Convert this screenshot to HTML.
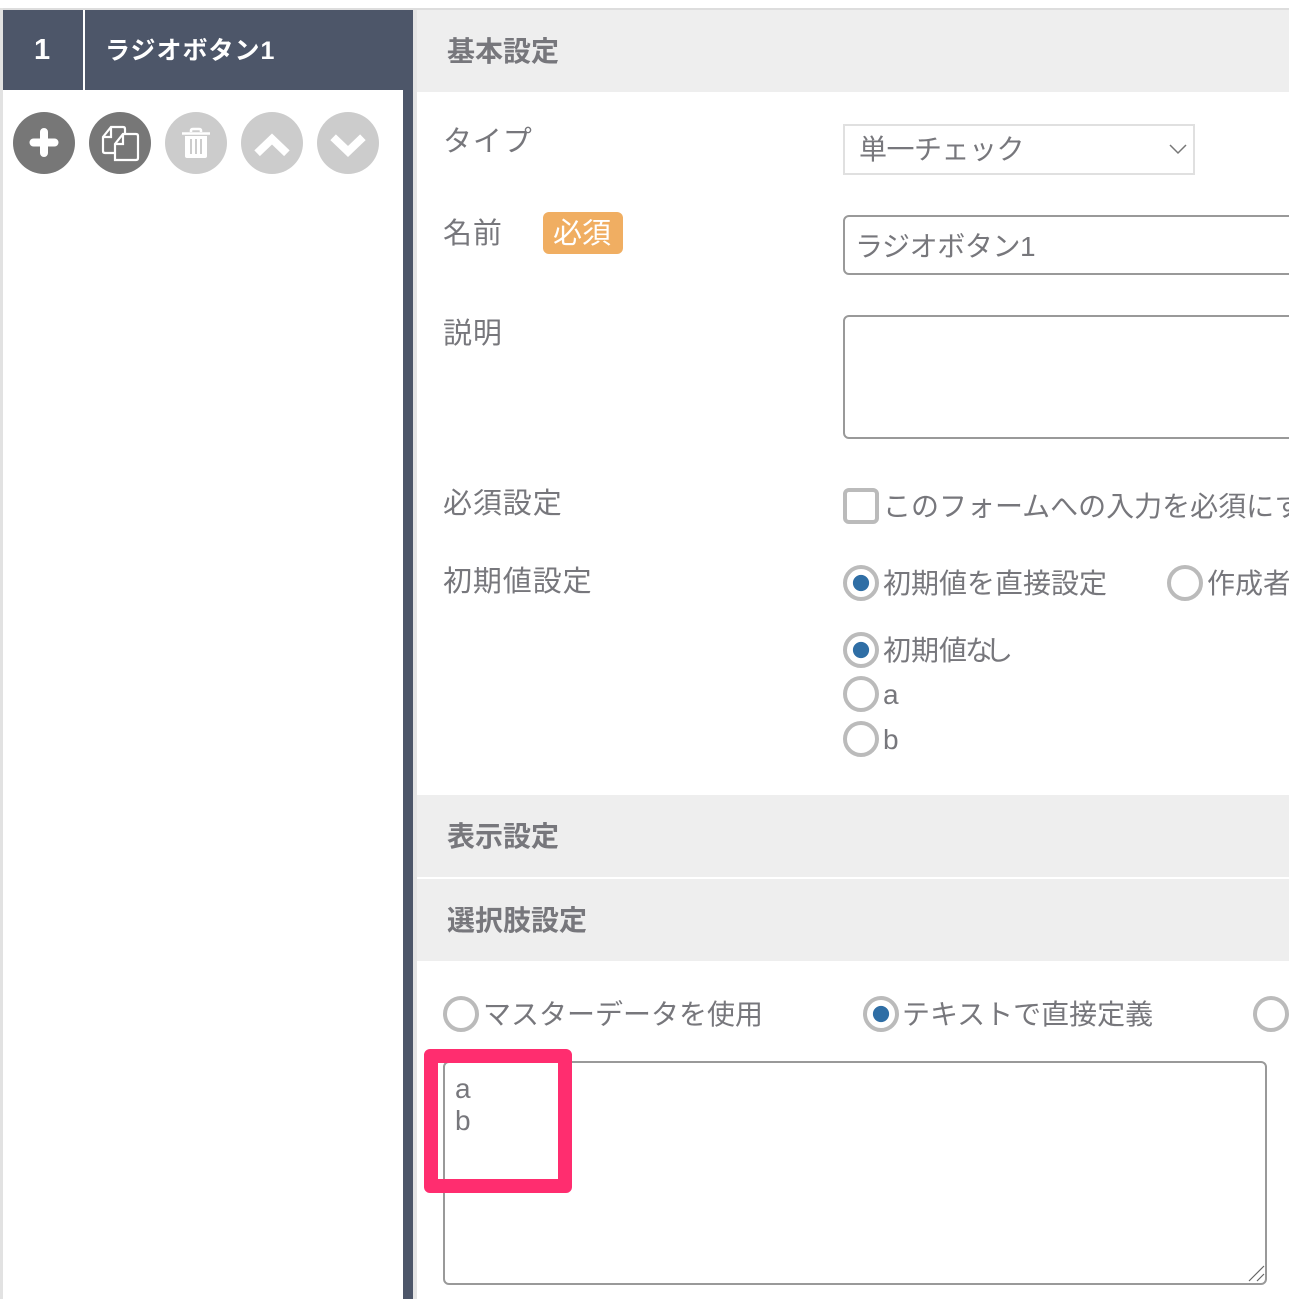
<!DOCTYPE html>
<html lang="ja"><head><meta charset="utf-8"><style>
html,body{margin:0;padding:0;background:#fff}
#p{position:relative;width:1289px;height:1299px;overflow:hidden;background:#fff;font-family:"Liberation Sans","Noto Sans CJK JP",sans-serif;color:#77777c;font-size:28px}
#p div{position:absolute;box-sizing:border-box}
.t{white-space:nowrap;line-height:40px;height:40px}
.l{font-size:29px;letter-spacing:.9px}
.h{background:#eee;left:417px;width:872px;height:82px}
.b{font-weight:700;left:447px}
.r{width:36px;height:36px;border:4px solid #bbb;border-radius:50%;background:#fff}
.r.on::after{content:"";position:absolute;left:5px;top:5px;width:18px;height:18px;border-radius:50%;background:#2f6ea5;transform:scale(.9)}
.c{width:62px;height:62px;border-radius:50%;top:112px}
.box{border:2px solid #999;border-radius:6px;background:#fff}
svg{position:absolute;left:0;top:0}
</style></head><body><div id="p">
<div style="left:0;top:8px;width:1289px;height:2px;background:#ddd"></div>
<div style="left:0;top:8px;width:3px;height:1291px;background:#e2e2e2"></div>
<div style="left:3px;top:10px;width:410px;height:80px;background:#4d5669"></div>
<div style="left:403px;top:90px;width:10px;height:1209px;background:#4d5669"></div>
<div style="left:413px;top:10px;width:4px;height:1289px;background:#e4e4e4"></div>
<div style="left:83px;top:10px;width:2px;height:80px;background:#fff"></div>
<div class="t" style="left:34px;top:30px;color:#fff;font-weight:700;font-size:29px">1</div>
<div class="t" style="left:105px;top:31px;color:#fff;font-weight:700;font-size:25px;letter-spacing:1px">ラジオボタン1</div>

<div class="c" style="left:13px;background:#777"><svg width="62" height="62"><path d="M31 20V41M20.500 30.500H41.500" stroke="#fff" stroke-width="8" stroke-linecap="round"/></svg></div>
<div class="c" style="left:89px;background:#777"><svg width="62" height="62" fill="none" stroke="#fff" stroke-width="2.200"><path d="M26 41H16Q14 41 14 39V25L22 15H34Q36 15 36 17V24M22 15V25H14"/><path d="M26 48V32L34 22H47Q49 22 49 24V46Q49 48 47 48H26ZM34 22V32H26" fill="#777"/></svg></div>
<div class="c" style="left:165px;background:#ccc"><svg width="62" height="62"><path d="M17 21.500H45M26 20V18.500Q26 17 28 17H34Q36 17 36 18.500V20" fill="none" stroke="#fff" stroke-width="2.500"/><path d="M20 24H42V44Q42 46 40 46H22Q20 46 20 44Z" fill="#fff"/><path d="M26 27V42M31 27V42M36 27V42" stroke="#ccc" stroke-width="2"/></svg></div>
<div class="c" style="left:241px;background:#ccc"><svg width="62" height="62"><path d="M19 38.500L31 27L43 38.500" fill="none" stroke="#fff" stroke-width="8" stroke-linecap="square"/></svg></div>
<div class="c" style="left:317px;background:#ccc"><svg width="62" height="62"><path d="M19 28L31 39.500L43 28" fill="none" stroke="#fff" stroke-width="8" stroke-linecap="square"/></svg></div>

<div class="h" style="top:10px"></div>
<div class="t b" style="top:32px">基本設定</div>
<div class="t l" style="left:443px;top:122px">タイプ</div>
<div class="t l" style="left:443px;top:214px">名前</div>
<div style="left:543px;top:212px;width:80px;height:42px;background:#f0ae62;border-radius:6px"></div>
<div class="t" style="left:553px;top:214px;color:#fff;font-size:29px">必須</div>
<div class="t l" style="left:443px;top:314px">説明</div>
<div class="t l" style="left:443px;top:484px">必須設定</div>
<div class="t l" style="left:443px;top:562px">初期値設定</div>

<div style="left:843px;top:124px;width:352px;height:51px;border:2px solid #e0e0e0;background:#fff"></div>
<div class="t" style="left:859px;top:130px;letter-spacing:-.5px">単一チェック</div>
<svg style="left:1168px;top:143px" width="20" height="12"><path d="M2 2L10 10L18 2" fill="none" stroke="#777" stroke-width="1.500"/></svg>

<div class="box" style="left:843px;top:215px;width:500px;height:60px"></div>
<div class="t" style="left:855px;top:227px;letter-spacing:-.4px">ラジオボタン1</div>
<div class="box" style="left:843px;top:315px;width:500px;height:124px"></div>

<div style="left:843px;top:488px;width:36px;height:36px;border:4px solid #bbb;border-radius:6px"></div>
<div class="t" style="left:883px;top:487px">このフォームへの入力を必須にする</div>

<div class="r on" style="left:843px;top:565px"></div>
<div class="t" style="left:883px;top:564px">初期値を直接設定</div>
<div class="r" style="left:1167px;top:565px"></div>
<div class="t" style="left:1207px;top:564px">作成者</div>
<div class="r on" style="left:843px;top:632px"></div>
<div class="t" style="left:883px;top:631px">初期値<span style="letter-spacing:-8px;margin-left:-2px">なし</span></div>
<div class="r" style="left:843px;top:676px"></div>
<div class="t" style="left:883px;top:675px">a</div>
<div class="r" style="left:843px;top:721px"></div>
<div class="t" style="left:883px;top:720px">b</div>

<div class="h" style="top:795px"></div>
<div class="t b" style="top:817px">表示設定</div>
<div class="h" style="top:879px"></div>
<div class="t b" style="top:901px">選択肢設定</div>

<div class="r" style="left:443px;top:996px"></div>
<div class="t" style="left:483px;top:995px">マスターデータを使用</div>
<div class="r on" style="left:863px;top:996px"></div>
<div class="t" style="left:902px;top:995px">テキストで直接定義</div>
<div class="r" style="left:1253px;top:996px"></div>

<div class="box" style="left:443px;top:1061px;width:824px;height:224px"></div>
<div class="t" style="left:455px;top:1069px;height:32px;line-height:40px">a</div>
<div class="t" style="left:455px;top:1101px;height:32px;line-height:40px">b</div>
<svg style="left:1245px;top:1263px" width="20" height="20"><path d="M4 18L19 3M12 18L19 11" stroke="#666" stroke-width="1.200" fill="none"/></svg>
<div style="left:424px;top:1049px;width:148px;height:144px;border:14px solid #ff2d6f;border-radius:6px"></div>
</div></body></html>
